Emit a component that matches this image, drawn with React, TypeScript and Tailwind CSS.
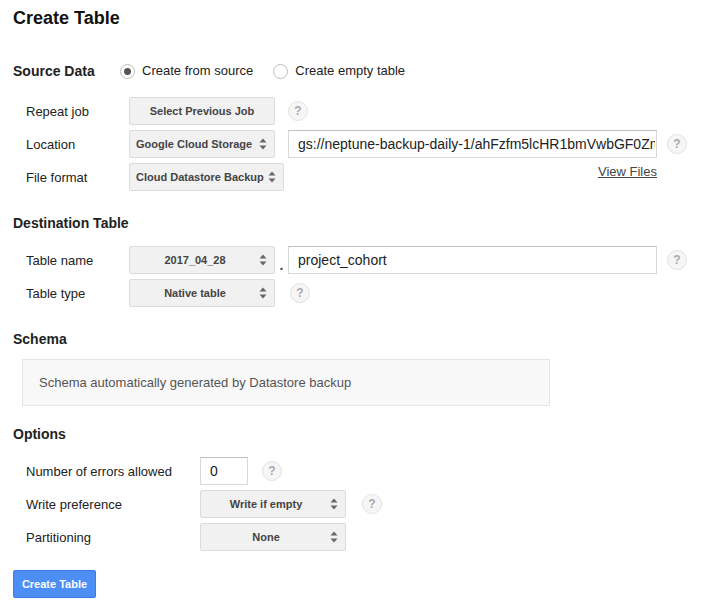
const font = { fontFamily: '"Liberation Sans", Arial, sans-serif' }

function Help({ className = '' }: { className?: string }) {
  return (
    <span className={`inline-flex h-[20px] w-[20px] items-center justify-center rounded-full border border-[#e2e2e2] bg-[#f6f6f6] text-[12px] font-bold text-[#a8a8a8] ${className}`}>
      ?
    </span>
  )
}

function Arrows() {
  return (
    <svg width="8" height="12" viewBox="0 0 8 12" className="absolute right-[7px] top-1/2 -translate-y-1/2">
      <path d="M4 0.5 L7.5 4.5 L0.5 4.5 Z" fill="#666" />
      <path d="M4 11.5 L7.5 7.5 L0.5 7.5 Z" fill="#666" />
    </svg>
  )
}

function Select({ label, width, align = 'center' }: { label: string; width?: string; align?: 'center' | 'left' }) {
  return (
    <div
      className={`relative flex h-[28px] items-center rounded-[2px] border border-[#dcdcdc] bg-[#f1f1f1] text-[11px] font-bold text-[#444] ${width ?? ''} ${align === 'center' ? 'justify-center pl-[8px] pr-[22px]' : 'pl-[6px] pr-[19px]'}`}
    >
      <span className="whitespace-nowrap">{label}</span>
      <Arrows />
    </div>
  )
}

function Row({ label, labelW, children }: { label: string; labelW: string; children: React.ReactNode }) {
  return (
    <div className="flex h-[28px] items-center">
      <div className={`${labelW} shrink-0 pt-[1px] text-[13px] text-[#222]`}>{label}</div>
      {children}
    </div>
  )
}

function Heading({ children, className = '' }: { children: React.ReactNode; className?: string }) {
  return <div className={`h-[20px] text-[14px] font-bold leading-[20px] text-[#222] ${className}`}>{children}</div>
}

function Radio({ checked, label }: { checked?: boolean; label: string }) {
  return (
    <label className="flex items-center gap-[7px] text-[13px] text-[#222]">
      <span className="flex h-[15px] w-[15px] items-center justify-center rounded-full border border-[#bdbdbd] bg-white">
        {checked && <span className="h-[7px] w-[7px] rounded-full bg-[#555]" />}
      </span>
      {label}
    </label>
  )
}

const inputCls = 'h-[28px] border border-[#d9d9d9] border-t-[#c0c0c0] pl-[9px] pr-[1px] text-[14px] text-[#222] outline-none'

export default function App() {
  return (
    <div style={font} className="h-[611px] w-[713px] bg-white pl-[13px] text-[#222]">
      <div className="pt-[7px] text-[18px] font-bold leading-[22px] text-[#111]">Create Table</div>

      <div className="mt-[32px] flex h-[20px] items-center">
        <Heading className="w-[107px]">Source Data</Heading>
        <div className="flex items-center gap-[20px]">
          <Radio checked label="Create from source" />
          <Radio label="Create empty table" />
        </div>
      </div>

      <div className="mt-[16px] flex flex-col gap-[5px] pl-[13px]">
        <Row label="Repeat job" labelW="w-[103px]">
          <button className="h-[28px] w-[146px] rounded-[2px] border border-[#dcdcdc] bg-[#f1f1f1] text-[11px] font-bold text-[#444]">
            Select Previous Job
          </button>
          <Help className="ml-[13px]" />
        </Row>
        <Row label="Location" labelW="w-[103px]">
          <Select label="Google Cloud Storage" width="w-[146px]" align="left" />
          <input
            readOnly
            value="gs://neptune-backup-daily-1/ahFzfm5lcHR1bmVwbGF0Zm9ybXIVCxIIQmFja3Vw"
            className={`ml-[13px] w-[369px] ${inputCls}`}
          />
          <Help className="ml-[10px]" />
        </Row>
        <div className="flex h-[28px] w-[631px] items-center">
          <div className="w-[103px] shrink-0 pt-[1px] text-[13px] text-[#222]">File format</div>
          <Select label="Cloud Datastore Backup" align="left" />
          <a className="ml-auto mt-[1px] self-start text-[13px] leading-[16px] text-[#444] underline">View Files</a>
        </div>
      </div>

      <Heading className="mt-[22px]">Destination Table</Heading>
      <div className="mt-[13px] flex flex-col gap-[5px] pl-[13px]">
        <Row label="Table name" labelW="w-[103px]">
          <Select label="2017_04_28" width="w-[146px]" />
          <span className="flex w-[13px] justify-center self-end pb-[2px] text-[14px] font-bold leading-[14px] text-[#444]">.</span>
          <input readOnly value="project_cohort" className={`w-[369px] ${inputCls}`} />
          <Help className="ml-[10px]" />
        </Row>
        <Row label="Table type" labelW="w-[103px]">
          <Select label="Native table" width="w-[146px]" />
          <Help className="ml-[15px]" />
        </Row>
      </div>

      <Heading className="mt-[22px]">Schema</Heading>
      <div className="ml-[9px] mt-[10px] flex h-[47px] w-[528px] items-center border border-[#e5e5e5] bg-[#f8f8f8] pl-[16px] text-[13px] text-[#555]">
        Schema automatically generated by Datastore backup
      </div>

      <Heading className="mt-[18px]">Options</Heading>
      <div className="mt-[13px] flex flex-col gap-[5px] pl-[13px]">
        <Row label="Number of errors allowed" labelW="w-[174px]">
          <input readOnly value="0" className={`w-[48px] ${inputCls}`} />
          <Help className="ml-[14px]" />
        </Row>
        <Row label="Write preference" labelW="w-[174px]">
          <Select label="Write if empty" width="w-[146px]" />
          <Help className="ml-[16px]" />
        </Row>
        <Row label="Partitioning" labelW="w-[174px]">
          <Select label="None" width="w-[146px]" />
        </Row>
      </div>

      <button className="mt-[19px] h-[28px] w-[83px] rounded-[2px] border border-[#3b7ae8] bg-[#4d8ef6] text-[11px] font-bold text-white">
        Create Table
      </button>
    </div>
  )
}
